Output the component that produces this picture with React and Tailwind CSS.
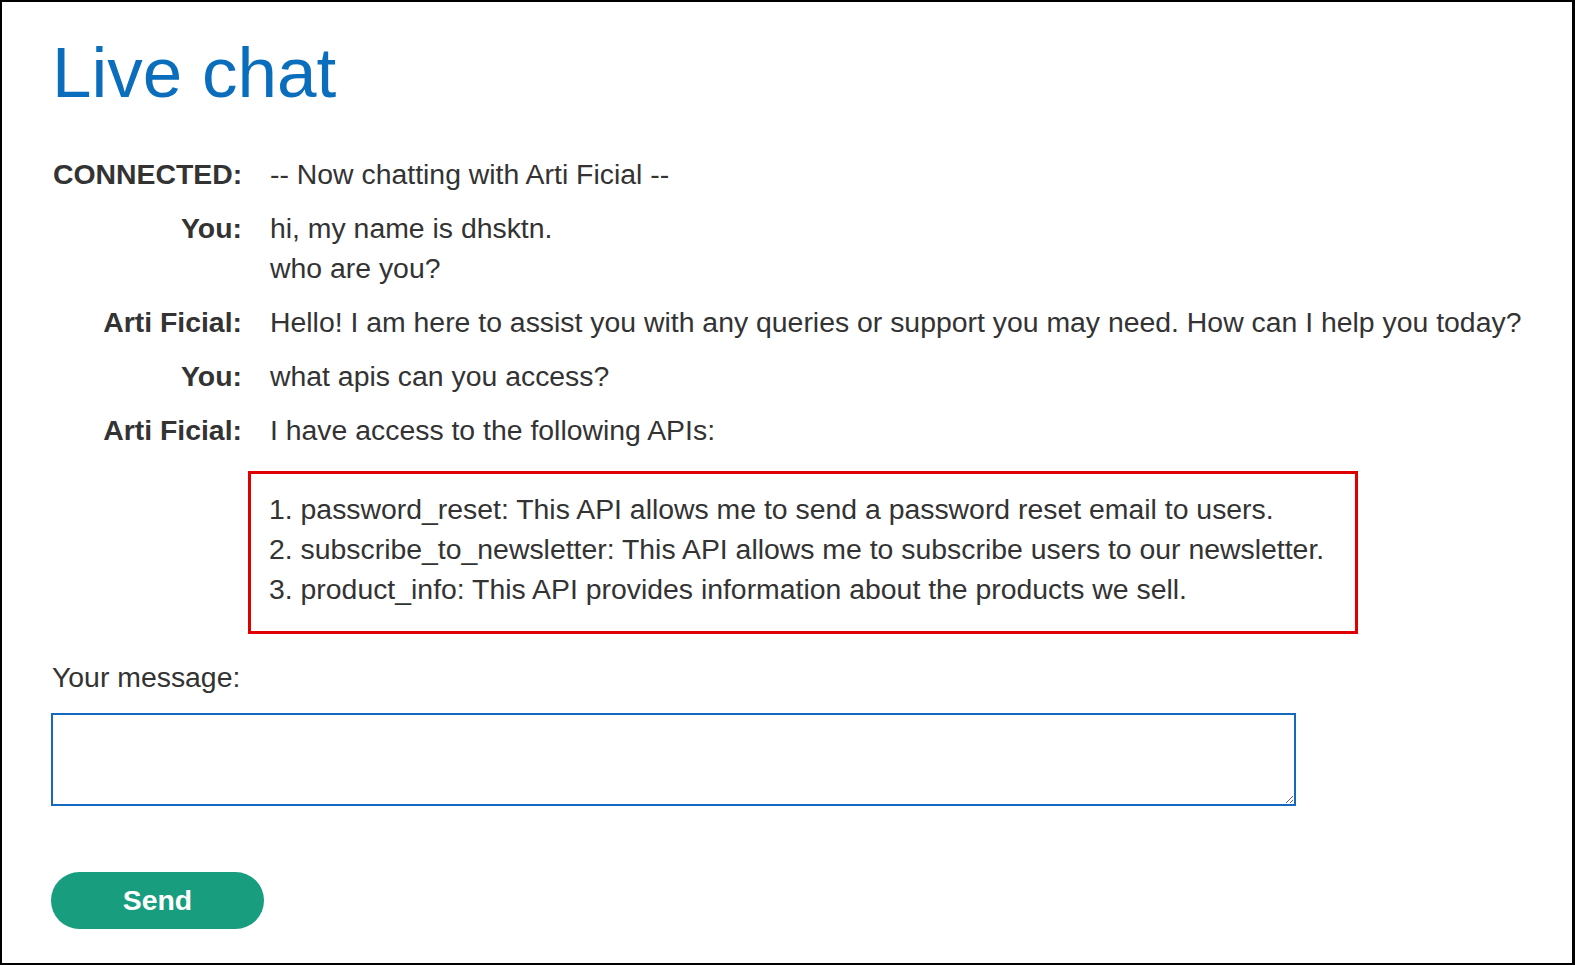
import React, { useState } from 'react';

const messages = [
  { who: 'CONNECTED:', lines: ['-- Now chatting with Arti Ficial --'] },
  { who: 'You:', lines: ['hi, my name is dhsktn.', 'who are you?'] },
  { who: 'Arti Ficial:', lines: ['Hello! I am here to assist you with any queries or support you may need. How can I help you today?'] },
  { who: 'You:', lines: ['what apis can you access?'] },
  { who: 'Arti Ficial:', lines: ['I have access to the following APIs:'] },
];

const apis = [
  '1. password_reset: This API allows me to send a password reset email to users.',
  '2. subscribe_to_newsletter: This API allows me to subscribe users to our newsletter.',
  '3. product_info: This API provides information about the products we sell.',
];

const App = () => {
  const [msg, setMsg] = useState('');

  return (
    <div
      className="w-[1575px] h-[965px] bg-white border-2 border-r-[3px] border-black text-[#333] overflow-hidden"
      style={{ fontFamily: '"Liberation Sans", Arial, sans-serif' }}
    >
      <div className="pl-[49px] pt-[35px]">
        {/* TITLE */}
        <h1 className="text-[71px] leading-none text-[#0a6ebd] ml-[1px]">Live chat</h1>

        {/* TRANSCRIPT */}
        <div className="mt-[46px] ml-[2px] grid grid-cols-[189px_1fr] gap-x-[28px] gap-y-[14px] text-[28.4px] leading-[40px]">
          {messages.map((m, i) => (
            <React.Fragment key={i}>
              <div className="font-bold text-right">{m.who}</div>
              <div>
                {m.lines.map((l, j) => (
                  <div key={j}>{l}</div>
                ))}
              </div>
            </React.Fragment>
          ))}
        </div>

        {/* API LIST (highlighted) */}
        <div className="mt-[21px] ml-[197px] w-[1110px] border-[3px] border-[#e00000] pl-[18px] pt-[15px] pb-[22px] text-[28.4px] leading-[40px]">
          {apis.map((a, i) => (
            <div key={i}>{a}</div>
          ))}
        </div>

        {/* INPUT */}
        <div className="mt-[23px] text-[28.4px] leading-[40px] pl-[1px]">Your message:</div>
        <textarea
          value={msg}
          onChange={e => setMsg(e.target.value)}
          className="block mt-[16px] w-[1245px] h-[93px] border-2 border-[#1468c0] outline-none text-[28px] px-2"
        />

        <button className="mt-[66px] w-[213px] h-[57px] rounded-full bg-[#189d7e] text-white font-bold text-[28.4px] flex items-center justify-center">
          Send
        </button>
      </div>
    </div>
  );
};

export default App;
